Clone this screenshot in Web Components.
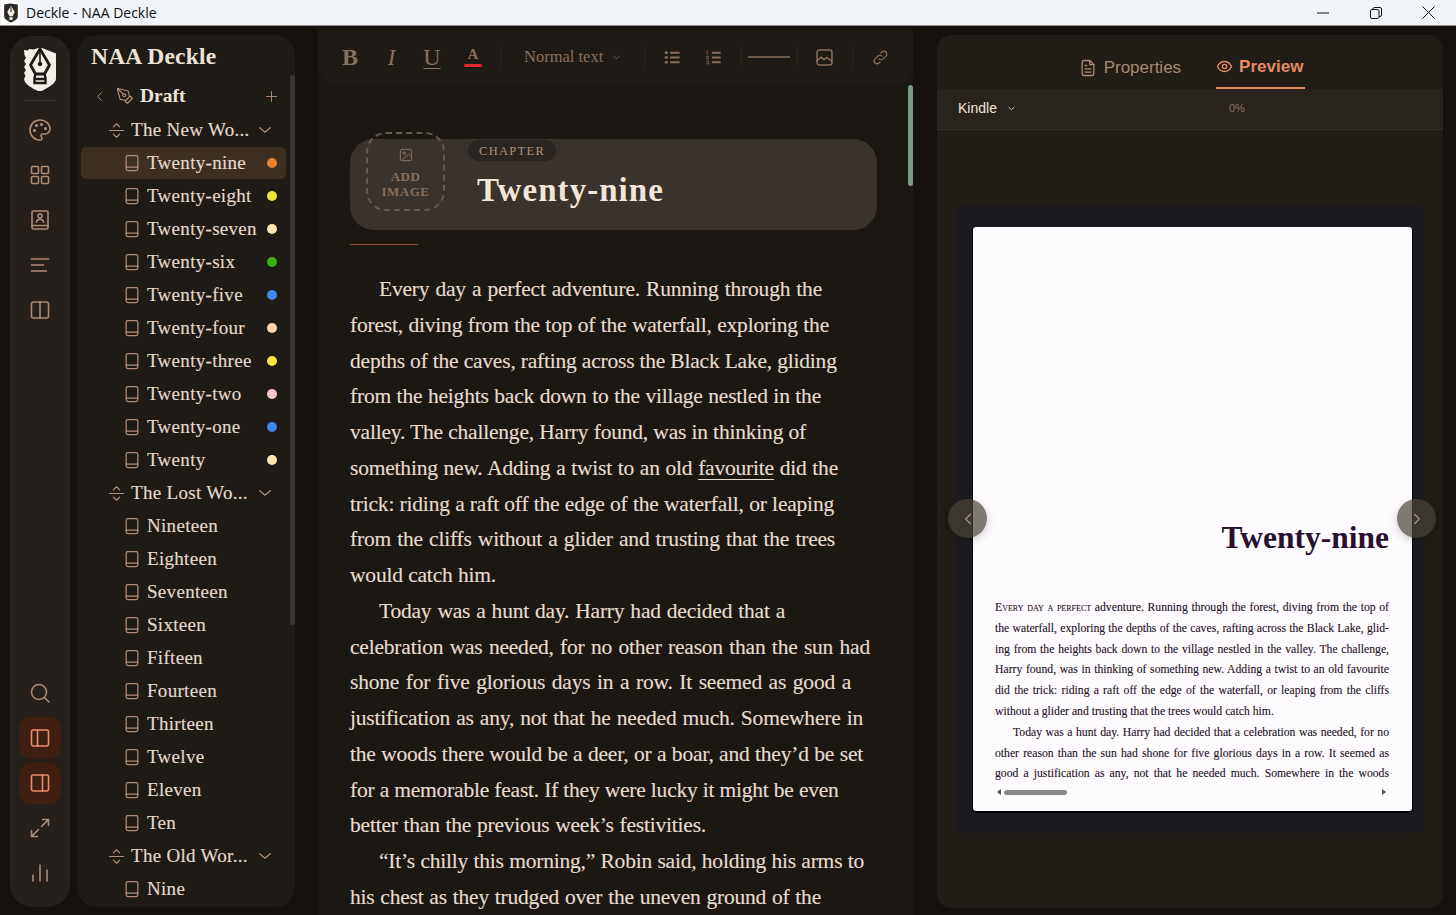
<!DOCTYPE html>
<html lang="en">
<head>
<meta charset="utf-8">
<title>Deckle - NAA Deckle</title>
<style>
  html, body { margin: 0; height: 100%; overflow: hidden; background: #14110e; }
  body { display: flex; flex-direction: column; height: 915px; }
  .workspace { flex: 1; min-height: 0; display: flex; }
</style>
</head>
<body>
<deckle-titlebar></deckle-titlebar>
<div class="workspace">
  <deckle-rail></deckle-rail>
  <deckle-sidebar></deckle-sidebar>
  <deckle-editor></deckle-editor>
  <deckle-preview></deckle-preview>
</div>

<script>
// stroke icons, all on a 24 box
const ICONS = {
  palette: '<path d="M12 22a1 1 0 0 1 0-20 10 9 0 0 1 10 9 5 5 0 0 1-5 5h-2.250a1.750 1.750 0 0 0-1.400 2.800l.3.4a1.750 1.750 0 0 1-1.400 2.800z"/><circle cx="13.500" cy="6.500" r=".8" fill="currentColor"/><circle cx="17.500" cy="10.500" r=".8" fill="currentColor"/><circle cx="6.500" cy="12.500" r=".8" fill="currentColor"/><circle cx="8.500" cy="7.500" r=".8" fill="currentColor"/>',
  grid: '<rect x="3.500" y="3.500" width="7" height="7" rx="1"/><rect x="13.500" y="3.500" width="7" height="7" rx="1"/><rect x="3.500" y="13.500" width="7" height="7" rx="1"/><rect x="13.500" y="13.500" width="7" height="7" rx="1"/>',
  contact: '<rect x="4" y="3" width="16" height="18" rx="1.500"/><path d="M4 17.500h16"/><circle cx="12" cy="8" r="2"/><path d="M8.500 14c.3-1.800 1.700-2.800 3.500-2.800s3.200 1 3.500 2.800"/>',
  lines: '<path d="M3.500 6h17M3.500 12h12M3.500 18h15"/>',
  columns: '<rect x="3.500" y="4" width="17" height="16" rx="2"/><path d="M12 4v16"/>',
  search: '<circle cx="11" cy="11" r="7.500"/><path d="M21 21l-4.500-4.500"/>',
  panelLeft: '<rect x="3.500" y="4" width="17" height="16" rx="2"/><path d="M9.500 4v16"/>',
  panelRight: '<rect x="3.500" y="4" width="17" height="16" rx="2"/><path d="M14.500 4v16"/>',
  expand: '<path d="M14.500 3.500h6v6M20.500 3.500L13.500 10.500M9.500 20.500h-6v-6M3.500 20.500l7-7"/>',
  chart: '<path d="M5 20v-6M12 20V4M19 20V9"/>',
  pen: '<path d="M15.700 21.300a1 1 0 0 1-1.400 0l-1.600-1.600a1 1 0 0 1 0-1.400l5.600-5.600a1 1 0 0 1 1.400 0l1.600 1.600a1 1 0 0 1 0 1.400z"/><path d="M18 13l-1.400-6.900a1 1 0 0 0-.7-.8L3.200 2a1 1 0 0 0-1.200 1.200l3.300 12.700a1 1 0 0 0 .8.700L13 18"/><path d="M2.300 2.300l7.300 7.300"/><circle cx="11" cy="11" r="2"/>',
  back: '<path d="M15 6l-6 6 6 6"/>',
  plus: '<path d="M12 4v16M4 12h16"/>',
  down: '<path d="M5 9l7 6 7-6"/>',
  fold: '<path d="M3 12h18M8 7.500l4-4 4 4M8 16.500l4 4 4-4"/>',
  book: '<rect x="5" y="3" width="14" height="18" rx="2"/><path d="M5 17h14"/>',
  image: '<rect x="3.500" y="3.500" width="17" height="17" rx="2.500"/><circle cx="9" cy="9" r="1.700"/><path d="M20.500 15l-4.500-4.500L5 20.500"/>',
  picture: '<rect x="3.500" y="3.500" width="17" height="17" rx="2.500"/><path d="M3.500 16l4.500-4.500 3.500 3 3-2.500 6 4.500"/>',
  link: '<path d="M10 14a4 4 0 0 0 5.700 0l4-4a4 4 0 0 0-5.700-5.700l-1.500 1.500"/><path d="M14 10a4 4 0 0 0-5.700 0l-4 4a4 4 0 0 0 5.700 5.700l1.500-1.500"/>',
  bullets: '<path d="M9 6h12M9 12h12M9 18h12" stroke-width="2.400" stroke-linecap="butt"/><path d="M3.500 6h1.500M3.500 12h1.500M3.500 18h1.500" stroke-width="3"/>',
  numbers: '<path d="M10 6h11M10 12h11M10 18h11" stroke-width="2.400" stroke-linecap="butt"/><path d="M4 3.500v5M3 11h3l-3 3h3M3 17h3v3H3" stroke-width="1"/>',
  file: '<path d="M14 3H7a2 2 0 0 0-2 2v14a2 2 0 0 0 2 2h10a2 2 0 0 0 2-2V8z"/><path d="M14 3v5h5M8.500 13h7M8.500 17h7M8.500 9h2"/>',
  eye: '<path d="M2 12s3.600-7 10-7 10 7 10 7-3.600 7-10 7-10-7-10-7z"/><circle cx="12" cy="12" r="3"/>',
  next: '<path d="M9 6l6 6-6 6"/>'
}

function icon (name, size, width = 1.8) {
  return `<svg width="${size}" height="${size}" viewBox="0 0 24 24" fill="none" stroke="currentColor" stroke-width="${width}" stroke-linecap="round" stroke-linejoin="round" aria-hidden="true">${ICONS[name]}</svg>`
}

const SERIF = '"Liberation Serif", "DejaVu Serif", serif'
const SANS = '"Liberation Sans", Arial, sans-serif'

customElements.define('deckle-titlebar',
  class extends HTMLElement {
    constructor () {
      super()
      this.attachShadow({ mode: 'open' }).innerHTML = `
        <style>
          :host { display: flex; align-items: center; height: 25px; flex: none; padding-right: 1px; background: #f0f4f9; border-bottom: 1px solid #8f8f8f; font: 14px "Open Sans", ${SANS}; color: #111; }
          .logo { width: 19px; height: 25px; display: flex; align-items: center; justify-content: center; margin-left: 1px; background: #fff; }
          .name { margin-left: 6px; flex: 1; }
          .btn { width: 53px; height: 25px; display: flex; align-items: center; justify-content: center; }
        </style>
        <span class="logo"><svg width="16" height="20" viewBox="0 0 30 38"><path d="M2 3l11-2 15 2v22c0 5-6 9-13 12C8 34 2 30 2 25z" fill="#2f2a25"/><path d="M15 5l7 12-4 8h-6L8 17z" fill="#f4f1ea"/><path d="M15 7v10" stroke="#2f2a25" stroke-width="2"/><path d="M12 27h6v5h-6z" fill="#f4f1ea"/></svg></span>
        <span class="name">Deckle - NAA Deckle</span>
        <span class="btn"><svg width="12" height="12" viewBox="0 0 12 12"><path d="M0 6h12" stroke="#111"/></svg></span>
        <span class="btn"><svg width="12" height="12" viewBox="0 0 12 12" fill="none" stroke="#111"><rect x=".5" y="2.500" width="8.500" height="9" rx="1.500"/><path d="M3 2.500V2a1.500 1.500 0 0 1 1.500-1.500H10A1.500 1.500 0 0 1 11.500 2v6A1.500 1.500 0 0 1 10 9.500H9"/></svg></span>
        <span class="btn"><svg width="13" height="13" viewBox="0 0 13 13"><path d="M.5.5l12 12M12.500.5l-12 12" stroke="#111"/></svg></span>
      `
    }
  }
)

customElements.define('deckle-rail',
  class extends HTMLElement {
    constructor () {
      super()
      const button = (name, on) => `<span class="btn ${on ? 'on' : ''}">${icon(name, 24, 1.6)}</span>`
      this.attachShadow({ mode: 'open' }).innerHTML = `
        <style>
          :host { display: flex; flex-direction: column; align-items: center; flex: none; width: 60px; margin: 10px 0 8px 10px; padding: 11px 0 10px; box-sizing: border-box; background: #25201b; border-radius: 22px; color: #ad8b75; }
          .logo { display: block; }
          hr { width: 32px; height: 1px; margin: 9px 0 8px; border: 0; background: #3a332b; }
          .btn { width: 42px; height: 42px; margin-bottom: 3px; display: flex; align-items: center; justify-content: center; border-radius: 13px; }
          .btn.on { background: #3e1f12; color: #e98f6a; }
          .top { display: flex; flex-direction: column; align-items: center; }
          .push { flex: 1; }
        </style>
        <svg class="logo" width="34" height="44" viewBox="0 0 34 44">
          <path d="M1 3l4 .5 1-1.500 5 .5 4-1.500h4l14 5.500v25c0 5-8 9-16 13.500C9 41 2 38 1 32l1.500-3L1 26l2-3-2-3 2-3-2-3 2-3-1.500-3z" fill="#f2efe8"/>
          <path d="M17 2l9.500 16L21.500 27h-9L7.500 18z" fill="none" stroke="#1d1a16" stroke-width="2.800" stroke-linejoin="round"/>
          <path d="M17 4v11" stroke="#1d1a16" stroke-width="1.600"/><circle cx="17" cy="17" r="2.200" fill="#1d1a16"/>
          <path d="M12.500 27l-1 4v5h11v-5l-1-4 M11.500 32h11" fill="none" stroke="#1d1a16" stroke-width="2.400"/>
        </svg>
        <hr>
        <div class="top">${button('palette')}${button('grid')}${button('contact')}${button('lines')}${button('columns')}</div>
        <span class="push"></span>
        <div class="top">${button('search')}${button('panelLeft', true)}${button('panelRight', true)}${button('expand')}${button('chart')}</div>
      `
    }
  }
)

customElements.define('tree-row',
  class extends HTMLElement {
    constructor () {
      super()
      const part = this.getAttribute('kind') === 'part'
      const dot = this.getAttribute('dot')
      this.attachShadow({ mode: 'open' }).innerHTML = `
        <style>
          :host { display: flex; align-items: center; height: 32px; margin: 0 9px 1px 4px; border-radius: 5px; font-size: 19px; letter-spacing: .3px; -webkit-text-stroke: .15px currentColor; color: #e3d9cc; white-space: nowrap; }
          :host([active]) { background: #3d2f22; }
          svg { display: block; color: #b08e77; }
          span { flex: none; }
          .book { margin-left: 41px; margin-right: 5px; }
          .fold { margin-left: 26px; margin-right: 5px; }
          .name { flex: 1; overflow: hidden; }
          .dot { width: 10px; height: 10px; border-radius: 50%; margin-right: 9px; }
          .arrow { margin-right: 12px; }
        </style>
        ${part
          ? `<span class="fold">${icon('fold', 19, 1.5)}</span><span class="name"><slot></slot></span><span class="arrow">${icon('down', 18, 1.6)}</span>`
          : `<span class="book">${icon('book', 20, 1.5)}</span><span class="name"><slot></slot></span>${dot ? `<span class="dot" style="background:${dot}"></span>` : ''}`}
      `
    }
  }
)

customElements.define('deckle-sidebar',
  class extends HTMLElement {
    constructor () {
      super()
      this.attachShadow({ mode: 'open' }).innerHTML = `
        <style>
          :host { display: flex; flex-direction: column; flex: none; width: 218px; margin: 9px 0 8px 7px; box-sizing: border-box; position: relative; background: #1e1a15; border-radius: 20px; overflow: hidden; font-family: ${SERIF}; }
          h1 { margin: 6px 0 0 14px; font-size: 23.500px; line-height: 30px; font-weight: 700; color: #ece3d6; letter-spacing: .2px; }
          .draft { display: flex; align-items: center; height: 32px; margin: 9px 0 2px 0; color: #b08e77; }
          .draft .back { margin-left: 15px; }
          .draft .pen { margin-left: 9px; margin-right: 6px; }
          .draft b { flex: 1; font-size: 19.500px; color: #ece3d6; }
          .draft .plus { margin-right: 16px; }
          svg { display: block; }
          .bar { position: absolute; right: 0; top: 40px; bottom: 282px; width: 5px; background: #3c3630; border-radius: 3px; }
          .list { flex: 1; overflow: hidden; }
        </style>
        <h1>NAA Deckle</h1>
        <div class="draft">
          <span class="back">${icon('back', 15, 1.6)}</span>
          <span class="pen">${icon('pen', 18, 1.6)}</span>
          <b>Draft</b>
          <span class="plus">${icon('plus', 15, 1.5)}</span>
        </div>
        <div class="list">
          <tree-row kind="part">The New Wo...</tree-row>
          <tree-row active dot="#e58332">Twenty-nine</tree-row>
          <tree-row dot="#efe53f">Twenty-eight</tree-row>
          <tree-row dot="#ffe6b5">Twenty-seven</tree-row>
          <tree-row dot="#3fae12">Twenty-six</tree-row>
          <tree-row dot="#3f85f0">Twenty-five</tree-row>
          <tree-row dot="#ffd6b0">Twenty-four</tree-row>
          <tree-row dot="#f5e243">Twenty-three</tree-row>
          <tree-row dot="#f7c6c8">Twenty-two</tree-row>
          <tree-row dot="#3f85f0">Twenty-one</tree-row>
          <tree-row dot="#ffe6b5">Twenty</tree-row>
          <tree-row kind="part">The Lost Wo...</tree-row>
          <tree-row>Nineteen</tree-row>
          <tree-row>Eighteen</tree-row>
          <tree-row>Seventeen</tree-row>
          <tree-row>Sixteen</tree-row>
          <tree-row>Fifteen</tree-row>
          <tree-row>Fourteen</tree-row>
          <tree-row>Thirteen</tree-row>
          <tree-row>Twelve</tree-row>
          <tree-row>Eleven</tree-row>
          <tree-row>Ten</tree-row>
          <tree-row kind="part">The Old Wor...</tree-row>
          <tree-row>Nine</tree-row>
        </div>
        <span class="bar"></span>
      `
    }
  }
)

customElements.define('deckle-toolbar',
  class extends HTMLElement {
    constructor () {
      super()
      this.attachShadow({ mode: 'open' }).innerHTML = `
        <style>
          :host { display: flex; align-items: center; height: 54px; flex: none; padding-left: 23px; background: #1e1a15; border-radius: 0 0 18px 18px; color: #8a6f5d; font-family: ${SERIF}; box-sizing: border-box; }
          span { display: flex; align-items: center; justify-content: center; flex: none; }
          .b, .i, .u { font-size: 24px; width: 18px; }
          .b { font-weight: 700; }
          .i { font-style: italic; margin-left: 23.500px; }
          .u { text-decoration: underline; text-decoration-thickness: 1px; text-underline-offset: 3px; margin-left: 22.500px; }
          .a { flex-direction: column; width: 18px; margin-left: 23px; font-size: 15px; font-weight: 700; line-height: 15px; }
          .a i { display: block; width: 18px; height: 3px; margin-top: 2px; border-radius: 2px; background: #e8242c; }
          .sep { width: 1px; height: 22px; background: #2a251f; }
          .style { font-size: 16.500px; gap: 9px; white-space: nowrap; }
          .rule { width: 42px; height: 2px; background: #6e5a4a; }
        </style>
        <span class="b">B</span>
        <span class="i">I</span>
        <span class="u">U</span>
        <span class="a">A<i></i></span>
        <span class="sep" style="margin-left:18px"></span>
        <span class="style" style="margin-left:23px">Normal text ${icon('down', 9, 2)}</span>
        <span class="sep" style="margin-left:23px"></span>
        <span style="margin-left:18px">${icon('bullets', 19, 1.500)}</span>
        <span style="margin-left:22px">${icon('numbers', 19, 1.500)}</span>
        <span class="sep" style="margin-left:18px"></span>
        <span class="rule" style="margin-left:6px"></span>
        <span class="sep" style="margin-left:7px"></span>
        <span style="margin-left:16px">${icon('picture', 21, 1.700)}</span>
        <span class="sep" style="margin-left:17px"></span>
        <span style="margin-left:19px">${icon('link', 17, 1.700)}</span>
      `
    }
  }
)

customElements.define('chapter-head',
  class extends HTMLElement {
    constructor () {
      super()
      this.attachShadow({ mode: 'open' }).innerHTML = `
        <style>
          :host { display: block; position: relative; height: 91px; background: #3a322d; border-radius: 24px; }
          .image { position: absolute; left: 16px; top: -7px; width: 79px; height: 79px; box-sizing: border-box; border: 2px dashed #645a50; border-radius: 20px; display: flex; flex-direction: column; align-items: center; color: #85705f; font-size: 13px; font-weight: 700; line-height: 14.500px; text-align: center; letter-spacing: .5px; padding-top: 13px; }
          .image svg { margin-bottom: 7px; }
          .label { position: absolute; left: 118px; top: 1px; height: 21px; padding: 0 11px; border-radius: 11px; background: #2a2520; color: #b0917a; font-size: 12.500px; line-height: 22px; letter-spacing: 1.300px; }
          h2 { position: absolute; left: 127px; top: 32px; margin: 0; font-size: 33px; line-height: 38px; font-weight: 700; color: #f2e6d8; white-space: nowrap; letter-spacing: 1.050px; }
        </style>
        <div class="image">${icon('image', 16, 1.500)}<span>ADD<br>IMAGE</span></div>
        <span class="label">CHAPTER</span>
        <h2><slot></slot></h2>
      `
    }
  }
)

// every line keeps the break and the right edge it has in the manuscript view
const MANUSCRIPT = [
  ['Every day a perfect adventure. Running through the', 472, true],
  ['forest, diving from the top of the waterfall, exploring the', 479],
  ['depths of the caves, rafting across the Black Lake, gliding', 486],
  ['from the heights back down to the village nestled in the', 471],
  ['valley. The challenge, Harry found, was in thinking of', 456],
  ['something new. Adding a twist to an old <u>favourite</u> did the', 488],
  ['trick: riding a raft off the edge of the waterfall, or leaping', 484],
  ['from the cliffs without a glider and trusting that the trees', 485],
  ['would catch him.', 146],
  ['Today was a hunt day. Harry had decided that a', 435, true],
  ['celebration was needed, for no other reason than the sun had', 520],
  ['shone for five glorious days in a row. It seemed as good a', 501],
  ['justification as any, not that he needed much. Somewhere in', 513],
  ['the woods there would be a deer, or a boar, and they’d be set', 513],
  ['for a memorable feast. If they were lucky it might be even', 488],
  ['better than the previous week’s festivities.', 356],
  ['“It’s chilly this morning,” Robin said, holding his arms to', 514, true],
  ['his chest as they trudged over the uneven ground of the', 471]
]

customElements.define('deckle-editor',
  class extends HTMLElement {
    constructor () {
      super()
      const copy = MANUSCRIPT.map(([text, width, first]) =>
        `<div class="line ${first ? 'first' : ''}" style="width:${width}px">${text}</div>`).join('')
      this.attachShadow({ mode: 'open' }).innerHTML = `
        <style>
          :host { display: flex; flex-direction: column; flex: none; position: relative; width: 595px; margin: 4px 0 0 23px; min-height: 0; overflow: hidden; background: #1b1712; font-family: ${SERIF}; }
          .sheet { flex: 1; padding: 55px 36px 0 32px; overflow: hidden; }
          .accent { width: 68px; height: 1px; background: #94532f; margin-top: 14px; }
          .copy { margin-top: 27px; font-size: 21.500px; line-height: 35.760px; color: #e6dccf; letter-spacing: -.2px; -webkit-text-stroke: .15px currentColor; }
          .line { white-space: nowrap; text-align: justify; text-align-last: justify; }
          .first { text-indent: 29px; }
          u { text-decoration-thickness: 1px; text-underline-offset: 4px; }
          .thumb { position: absolute; right: 0; top: 55px; width: 5px; height: 101px; border-radius: 3px; background: #7e9684; }
        </style>
        <deckle-toolbar></deckle-toolbar>
        <div class="sheet">
          <chapter-head>Twenty-nine</chapter-head>
          <div class="accent"></div>
          <div class="copy">${copy}</div>
        </div>
        <span class="thumb"></span>
      `
    }
  }
)

customElements.define('book-page',
  class extends HTMLElement {
    constructor () {
      super()
      const line = (text, cls = '') => `<div class="line ${cls}">${text}</div>`
      this.attachShadow({ mode: 'open' }).innerHTML = `
        <style>
          :host { display: flex; flex-direction: column; width: 439px; height: 584px; flex: none; box-sizing: border-box; padding: 0 23px 0 22px; background: #fefbff; border-radius: 3px; box-shadow: 0 1px 0 1px #000; font-family: ${SERIF}; color: #1a1020; }
          h3 { margin: 287px 0 0; font-size: 31.500px; line-height: 48px; font-weight: 700; text-align: right; color: #2a1030; }
          .body { margin-top: 36px; font-size: 11.700px; line-height: 20.800px; -webkit-text-stroke: .1px currentColor; }
          .line { text-align: justify; text-align-last: justify; white-space: nowrap; }
          .line.end { text-align-last: left; }
          .line.in { text-indent: 18px; }
          .sc { font-variant: small-caps; }
          .scroll { display: flex; align-items: center; height: 12px; margin-top: 1px; }
          .l { width: 0; height: 0; border: 3px solid transparent; border-right: 4px solid #555; border-left: 0; margin-left: 2px; }
          .r { width: 0; height: 0; border: 3px solid transparent; border-left: 4px solid #555; border-right: 0; margin-right: 3px; }
          .t { width: 63px; height: 5px; margin-left: 3px; border-radius: 3px; background: #8a8a8a; }
          .sp { flex: 1; }
        </style>
        <h3>Twenty-nine</h3>
        <div class="body">
          ${line('<span class="sc">Every day a perfect</span> adventure. Running through the forest, diving from the top of')}
          ${line('the waterfall, exploring the depths of the caves, rafting across the Black Lake, glid-')}
          ${line('ing from the heights back down to the village nestled in the valley. The challenge,')}
          ${line('Harry found, was in thinking of something new. Adding a twist to an old favourite')}
          ${line('did the trick: riding a raft off the edge of the waterfall, or leaping from the cliffs')}
          ${line('without a glider and trusting that the trees would catch him.', 'end')}
          ${line('Today was a hunt day. Harry had decided that a celebration was needed, for no', 'in')}
          ${line('other reason than the sun had shone for five glorious days in a row. It seemed as')}
          ${line('good a justification as any, not that he needed much. Somewhere in the woods')}
        </div>
        <div class="scroll"><span class="l"></span><span class="t"></span><span class="sp"></span><span class="r"></span></div>
      `
    }
  }
)

customElements.define('deckle-preview',
  class extends HTMLElement {
    constructor () {
      super()
      this.attachShadow({ mode: 'open' }).innerHTML = `
        <style>
          :host { display: flex; flex-direction: column; flex: none; width: 506px; margin: 9px 0 7px 24px; background: #201c16; border-radius: 14px; overflow: hidden; font-family: ${SANS}; position: relative; }
          .tabs { display: flex; justify-content: center; gap: 35px; height: 54px; box-sizing: border-box; padding-left: 3px; font-size: 17px; }
          .tab { display: flex; align-items: center; gap: 6px; padding: 11px 0 0; color: #a88a74; }
          .tab.on { color: #e58a64; font-weight: 700; border-bottom: 2px solid #e58a64; padding-right: 2px; }
          .bar { display: flex; align-items: center; height: 41px; box-sizing: border-box; padding-bottom: 2px; background: #29231d; border-bottom: 1px solid #37302a; }
          .kindle { display: flex; align-items: center; gap: 10px; margin-left: 21px; font-size: 14px; color: #eee4d8; }
          .pct { margin-left: 213px; font-size: 11px; color: #8b7563; }
          .stage { flex: 1; padding: 75px 18px 0 18px; }
          .back { display: flex; height: 628px; padding: 22px 0 0 18px; box-sizing: border-box; border-radius: 9px; background: #1b1b1f; }
          .nav { position: absolute; top: 464px; width: 39px; height: 39px; border-radius: 50%; background: rgba(73, 66, 55, .7); color: #9a8c7c; display: flex; align-items: center; justify-content: center; box-shadow: 0 2px 8px rgba(0,0,0,.2); }
          .prev { left: 11px; }
          .next { left: 460px; }
        </style>
        <div class="tabs">
          <span class="tab">${icon('file', 20, 1.6)}Properties</span>
          <span class="tab on">${icon('eye', 17, 1.9)}Preview</span>
        </div>
        <div class="bar">
          <span class="kindle">Kindle ${icon('down', 9, 2.2)}</span>
          <span class="pct">0%</span>
        </div>
        <div class="stage"><div class="back"><book-page></book-page></div></div>
        <span class="nav prev">${icon('back', 18, 2.2)}</span>
        <span class="nav next">${icon('next', 18, 2.2)}</span>
      `
    }
  }
)
</script>
</body>
</html>
